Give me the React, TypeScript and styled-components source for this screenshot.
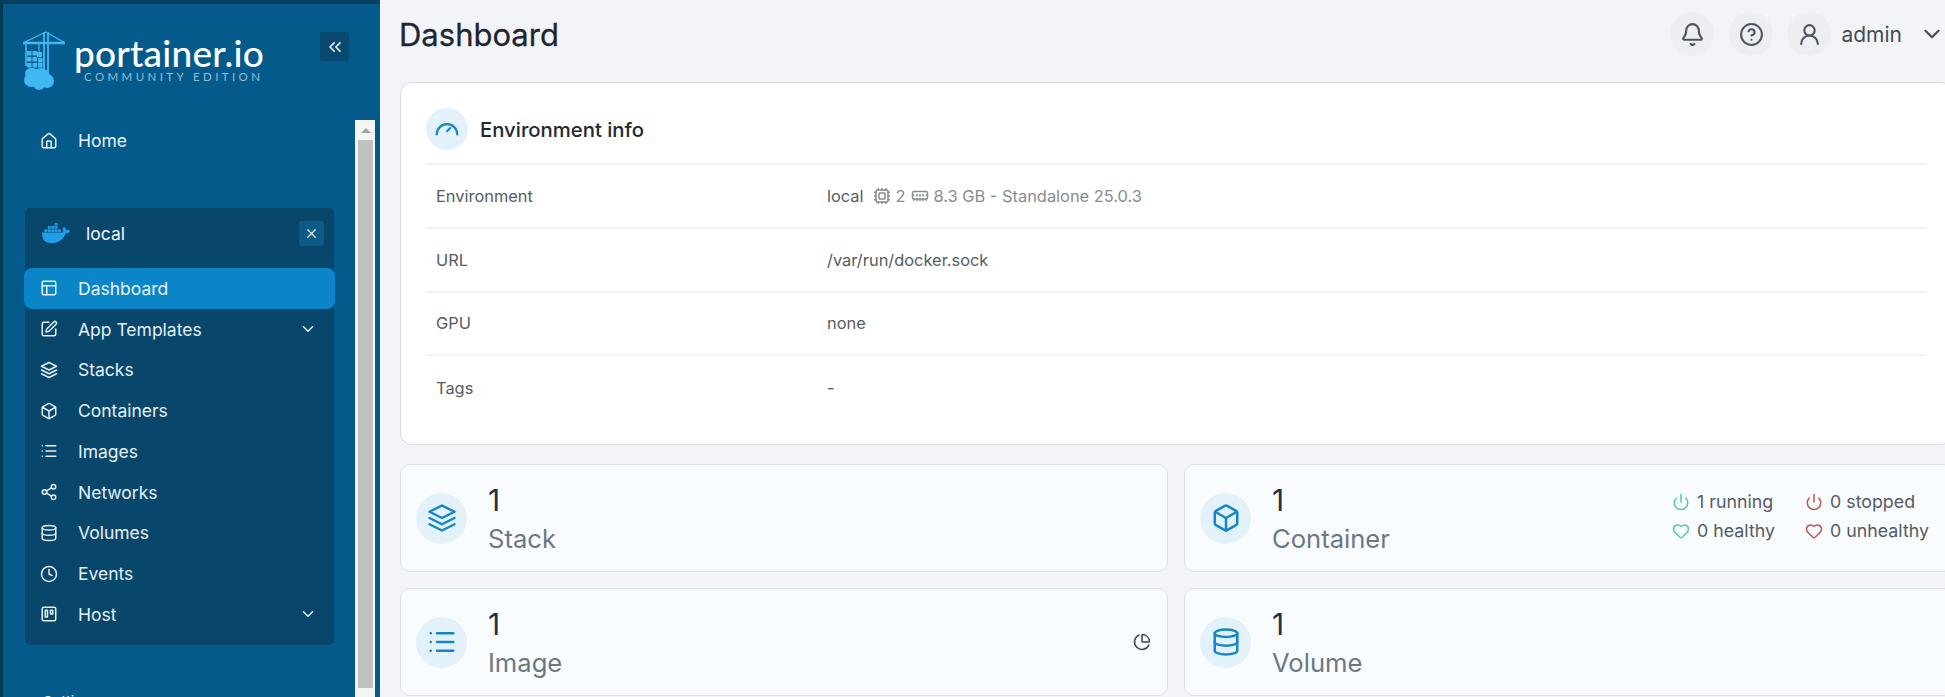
import React from "react";
import styled, { createGlobalStyle } from "styled-components";
import {
  House, PanelsTopLeft, SquarePen, Box, List, Share2, Database, Clock, ChevronDown, ChevronsLeft, X,
  Bell, CircleHelp, UserRound, Cpu, MemoryStick, Power, Heart, ChartPie,
} from "lucide-react";
import { SiDocker } from "react-icons/si";

const Global = createGlobalStyle`
  html, body { margin: 0; padding: 0; background: #f3f4f8; overflow: hidden; }
  body { font-family: Inter, "Liberation Sans", sans-serif; }
`;

const Page = styled.div`
  display: flex;
  width: 1945px;
  height: 697px;
  overflow: hidden;
`;

const Sidebar = styled.aside`
  box-sizing: border-box;
  flex: 0 0 380px;
  height: 697px;
  display: flex;
  flex-direction: column;
  background: #055a8c;
  border-top: 4px solid #06405f;
  border-left: 3px solid #03394f;
  overflow: hidden;
`;

const Brand = styled.div`
  box-sizing: border-box;
  flex: 0 0 116px;
  display: flex;
  align-items: flex-start;
  padding: 26px 31px 0 20px;
`;

const BrandText = styled.div`
  margin: 5px 0 0 9px;
  display: flex;
  flex-direction: column;
`;

const BrandName = styled.div`
  font-family: Lato, sans-serif;
  font-size: 37px;
  line-height: 36px;
  font-weight: 500;
  color: #fff;
  letter-spacing: 0.2px;
`;

const BrandEdition = styled.div`
  font-family: Lato, sans-serif;
  font-size: 11.5px;
  line-height: 12px;
  letter-spacing: 3.4px;
  margin: 0 0 0 10px;
  color: #93bcd3;
  white-space: nowrap;
`;

const Collapse = styled.div`
  margin: 2px 0 0 auto;
  width: 29px;
  height: 29px;
  display: flex;
  align-items: center;
  justify-content: center;
  background: #0a4a70;
  border-radius: 3px;
  color: #e4eef4;
`;

const SideBody = styled.div`
  flex: 1;
  min-height: 0;
  display: flex;
  padding-right: 5px;
`;

const NavColumn = styled.nav`
  flex: 1;
  padding-left: 22px;
  padding-right: 21px;
  overflow: hidden;
`;

const Scrollbar = styled.div`
  flex: 0 0 20px;
  display: flex;
  flex-direction: column;
  background: #f4f5f5;
  padding: 0 2px 0 3px;
  box-sizing: border-box;
`;

const ScrollArrow = styled.div`
  flex: 0 0 20px;
  display: flex;
  align-items: center;
  justify-content: center;
  &::before {
    content: "";
    border-left: 5px solid transparent;
    border-right: 5px solid transparent;
    border-bottom: 5px solid #a3a3a3;
  }
`;

const ScrollThumb = styled.div`
  flex: 0 0 548px;
  background: #c1c1c1;
`;

const HomeRow = styled.div`
  height: 41px;
  display: flex;
  align-items: center;
  gap: 20px;
  padding-left: 15px;
  font-size: 17.5px;
  color: #eaf2f7;
`;

const EnvPanel = styled.div`
  margin-top: 47px;
  width: 309px;
  box-sizing: border-box;
  background: #08476b;
  border-radius: 5px;
  padding-bottom: 10px;
`;

const EnvHeader = styled.div`
  box-sizing: border-box;
  height: 60px;
  display: flex;
  align-items: center;
  padding: 0 10px 10px 17px;
  color: #f1f6f9;
  font-size: 17.5px;
  font-weight: 400;
`;

const EnvName = styled.span`
  margin-left: 16px;
`;

const EnvClose = styled.div`
  margin-left: auto;
  width: 25px;
  height: 25px;
  display: flex;
  align-items: center;
  justify-content: center;
  background: #0c5a86;
  border-radius: 3px;
  color: #eef4f8;
`;

const NavItem = styled.div<{ $active?: boolean }>`
  box-sizing: border-box;
  height: 40.75px;
  margin: 0 -1px;
  padding: 0 18px 0 16px;
  display: flex;
  align-items: center;
  gap: 20px;
  border-radius: 8px;
  font-size: 17.5px;
  color: #e6f0f6;
  background: ${(p) => (p.$active ? "#0a86c8" : "transparent")};
`;

const NavChevron = styled.span`
  margin-left: auto;
  display: flex;
  color: #e6f0f6;
`;

const SectionLabel = styled.div`
  margin: 48px 0 0 18px;
  font-size: 15px;
  line-height: 18px;
  color: #d5e4ee;
`;

const Main = styled.main`
  flex: 0 0 1565px;
  height: 697px;
  overflow: hidden;
  background: #f3f4f8;
`;

const Inner = styled.div`
  width: 1552px;
  margin-left: 20px;
`;

const TopBar = styled.header`
  box-sizing: border-box;
  height: 82px;
  padding: 12px 7px 0 0;
  display: flex;
  align-items: flex-start;
`;

const Title = styled.h1`
  margin: 0 0 0 -1px;
  font-size: 31px;
  line-height: 46px;
  font-weight: 400;
  color: #1d2630;
  -webkit-text-stroke: 0.3px #1d2630;
`;

const TopActions = styled.div`
  margin-left: auto;
  display: flex;
  align-items: center;
  gap: 15px;
`;

const RoundButton = styled.div`
  width: 44px;
  height: 44px;
  border-radius: 50%;
  background: #eceef2;
  display: flex;
  align-items: center;
  justify-content: center;
  color: #4c5561;
`;

const UserMenu = styled.div`
  display: flex;
  align-items: center;
  color: #444c56;
  font-size: 21px;
  margin-left: -1px;
`;

const UserName = styled.span`
  margin: 0 17px 0 10px;
`;

const InfoCard = styled.section`
  box-sizing: border-box;
  height: 363px;
  background: #fff;
  border: 1px solid #d8dadd;
  border-radius: 12px;
  padding: 0 24px;
`;

const InfoHeader = styled.div`
  box-sizing: border-box;
  height: 82px;
  display: flex;
  align-items: center;
  gap: 12px;
  padding: 12px 0 0 1px;
  border-bottom: 2px solid #f2f3f5;
  font-size: 20.3px;
  font-weight: 500;
  color: #1f2933;
`;

const IconDisc = styled.div<{ $size: number }>`
  flex: 0 0 ${(p) => p.$size}px;
  height: ${(p) => p.$size}px;
  border-radius: 50%;
  background: #e2f1fa;
  color: #1487c4;
  display: flex;
  align-items: center;
  justify-content: center;
`;

const InfoRow = styled.div<{ $last?: boolean }>`
  box-sizing: border-box;
  height: 63.8px;
  display: grid;
  grid-template-columns: 391px 1fr;
  align-items: center;
  padding-left: 11px;
  font-size: 16.4px;
  color: #555b61;
  border-bottom: ${(p) => (p.$last ? "0" : "2px solid #f2f3f5")};
`;

const EnvValue = styled.div`
  display: flex;
  align-items: center;
`;

const Muted = styled.span`
  display: inline-flex;
  align-items: center;
  gap: 5px;
  margin-left: 9px;
  color: #868c92;
`;

const StatGrid = styled.div`
  margin-top: 19px;
  display: grid;
  grid-template-columns: 768px 768px;
  grid-auto-rows: 108px;
  column-gap: 16px;
  row-gap: 16px;
`;

const StatCard = styled.div<{ $pad: number }>`
  box-sizing: border-box;
  display: flex;
  align-items: center;
  gap: 21px;
  padding: 0 ${(p) => p.$pad}px 0 15px;
  background: #f9fcfe;
  border: 1px solid #d9e0e5;
  border-radius: 10px;
`;

const StatText = styled.div`
  display: flex;
  flex-direction: column;
  padding-top: 4px;
`;

const StatNumber = styled.div`
  font-size: 30px;
  line-height: 36px;
  margin-bottom: 2px;
  color: #27313b;
`;

const StatLabel = styled.div`
  font-size: 25.6px;
  line-height: 38px;
  color: #6c7784;
`;

const StatExtra = styled.div`
  margin-left: auto;
  display: flex;
  color: #3b434c;
`;

const Summary = styled.div`
  margin: -4px 0 0 auto;
  display: grid;
  grid-template-columns: 133px auto;
  row-gap: 7px;
  font-size: 17.8px;
  line-height: 22px;
  color: #555b61;
`;

const SummaryItem = styled.div`
  display: flex;
  align-items: center;
  gap: 7px;
`;

const Tint = styled.span<{ $color: string }>`
  display: flex;
  color: ${(p) => p.$color};
`;

const LayersIcon = ({ size }: { size: number }) => (
  <svg width={size} height={size} viewBox="0 0 24 24" fill="none" stroke="currentColor" strokeWidth="2" strokeLinecap="round" strokeLinejoin="round">
    <polygon points="12 2 2 7 12 12 22 7 12 2" />
    <polyline points="2 17 12 22 22 17" />
    <polyline points="2 12 12 17 22 12" />
  </svg>
);

const BoardIcon = ({ size }: { size: number }) => (
  <svg width={size} height={size} viewBox="0 0 24 24" fill="none" stroke="currentColor" strokeWidth="2" strokeLinecap="round" strokeLinejoin="round">
    <rect x="3" y="3" width="18" height="18" rx="2" />
    <rect x="7" y="7" width="3" height="9" />
    <rect x="14" y="7" width="3" height="5" />
  </svg>
);

const GaugeArc = ({ size }: { size: number }) => (
  <svg width={size} height={size} viewBox="0 0 24 24" fill="none" stroke="currentColor" strokeWidth="2" strokeLinecap="round">
    <path d="M2.5 17a9.5 9.5 0 0 1 19 0" />
    <path d="M12 14l3-3" />
  </svg>
);

const Logo = () => (
  <svg width="42" height="60" viewBox="0 0 42 60" style={{ flex: "0 0 42px" }}>
    <g stroke="#41b8f2" fill="none">
      <path d="M0 13H42" strokeWidth="2.4" />
      <path d="M23 2L0 13M23 2L42 13" strokeWidth="1.2" />
      <path d="M21 2V44M25 2V44" strokeWidth="1.8" />
      <path d="M3 13V36" strokeWidth="1.6" />
      <path d="M16 13V22" strokeWidth="1.2" />
    </g>
    <g fill="#41b8f2">
      <rect x="14" y="22" width="5" height="5" />
      <rect x="4" y="21" width="4.5" height="4.5" />
      <rect x="9.5" y="21" width="4.5" height="4.5" />
      <rect x="4" y="27" width="4.5" height="4.5" />
      <rect x="9.5" y="27" width="4.5" height="4.5" />
      <rect x="15" y="28" width="4.5" height="4.5" />
      <rect x="4" y="33" width="4.5" height="4.5" />
      <rect x="9.5" y="33" width="4.5" height="4.5" />
      <rect x="15" y="33" width="4.5" height="4.5" />
      <ellipse cx="9" cy="43" rx="7" ry="5" />
      <circle cx="18" cy="47" r="9" />
      <circle cx="8" cy="50" r="7" />
      <circle cx="24" cy="51" r="7" />
      <circle cx="16" cy="54" r="6" />
    </g>
  </svg>
);

const nav = [
  { label: "Dashboard", icon: <PanelsTopLeft size={18} />, active: true },
  { label: "App Templates", icon: <SquarePen size={18} />, more: true },
  { label: "Stacks", icon: <LayersIcon size={18} /> },
  { label: "Containers", icon: <Box size={18} /> },
  { label: "Images", icon: <List size={18} /> },
  { label: "Networks", icon: <Share2 size={18} /> },
  { label: "Volumes", icon: <Database size={18} /> },
  { label: "Events", icon: <Clock size={18} /> },
  { label: "Host", icon: <BoardIcon size={18} />, more: true },
];

const rows = [
  { label: "URL", value: "/var/run/docker.sock" },
  { label: "GPU", value: "none" },
];

export default function App() {
  return (
    <Page>
      <Global />
      <Sidebar>
        <Brand>
          <Logo />
          <BrandText>
            <BrandName>portainer.io</BrandName>
            <BrandEdition>COMMUNITY EDITION</BrandEdition>
          </BrandText>
          <Collapse><ChevronsLeft size={20} /></Collapse>
        </Brand>
        <SideBody>
          <NavColumn>
            <HomeRow><House size={18} />Home</HomeRow>
            <EnvPanel>
              <EnvHeader>
                <SiDocker size={28} color="#1f9fea" />
                <EnvName>local</EnvName>
                <EnvClose><X size={15} /></EnvClose>
              </EnvHeader>
              {nav.map((n) => (
                <NavItem key={n.label} $active={n.active}>
                  {n.icon}
                  {n.label}
                  {n.more && <NavChevron><ChevronDown size={18} /></NavChevron>}
                </NavItem>
              ))}
            </EnvPanel>
            <SectionLabel>Settings</SectionLabel>
          </NavColumn>
          <Scrollbar>
            <ScrollArrow />
            <ScrollThumb />
          </Scrollbar>
        </SideBody>
      </Sidebar>
      <Main>
        <Inner>
          <TopBar>
            <Title>Dashboard</Title>
            <TopActions>
              <RoundButton><Bell size={25} /></RoundButton>
              <RoundButton><CircleHelp size={25} /></RoundButton>
              <UserMenu>
                <RoundButton><UserRound size={25} /></RoundButton>
                <UserName>admin</UserName>
                <ChevronDown size={26} />
              </UserMenu>
            </TopActions>
          </TopBar>
          <InfoCard>
            <InfoHeader>
              <IconDisc $size={42}><GaugeArc size={26} /></IconDisc>
              Environment info
            </InfoHeader>
            <InfoRow>
              <span>Environment</span>
              <EnvValue>
                local
                <Muted><Cpu size={18} />2<MemoryStick size={18} />8.3 GB - Standalone 25.0.3</Muted>
              </EnvValue>
            </InfoRow>
            {rows.map((r) => (
              <InfoRow key={r.label}><span>{r.label}</span><span>{r.value}</span></InfoRow>
            ))}
            <InfoRow $last><span>Tags</span><span>-</span></InfoRow>
          </InfoCard>
          <StatGrid>
            <StatCard $pad={16}>
              <IconDisc $size={51}><LayersIcon size={30} /></IconDisc>
              <StatText><StatNumber>1</StatNumber><StatLabel>Stack</StatLabel></StatText>
            </StatCard>
            <StatCard $pad={22}>
              <IconDisc $size={51}><Box size={30} /></IconDisc>
              <StatText><StatNumber>1</StatNumber><StatLabel>Container</StatLabel></StatText>
              <Summary>
                <SummaryItem><Tint $color="#5cc8a6"><Power size={18} /></Tint>1 running</SummaryItem>
                <SummaryItem><Tint $color="#b55a4c"><Power size={18} /></Tint>0 stopped</SummaryItem>
                <SummaryItem><Tint $color="#5cc8a6"><Heart size={18} /></Tint>0 healthy</SummaryItem>
                <SummaryItem><Tint $color="#b55a4c"><Heart size={18} /></Tint>0 unhealthy</SummaryItem>
              </Summary>
            </StatCard>
            <StatCard $pad={16}>
              <IconDisc $size={51}><List size={30} /></IconDisc>
              <StatText><StatNumber>1</StatNumber><StatLabel>Image</StatLabel></StatText>
              <StatExtra><ChartPie size={18} /></StatExtra>
            </StatCard>
            <StatCard $pad={22}>
              <IconDisc $size={51}><Database size={30} /></IconDisc>
              <StatText><StatNumber>1</StatNumber><StatLabel>Volume</StatLabel></StatText>
            </StatCard>
          </StatGrid>
        </Inner>
      </Main>
    </Page>
  );
}
